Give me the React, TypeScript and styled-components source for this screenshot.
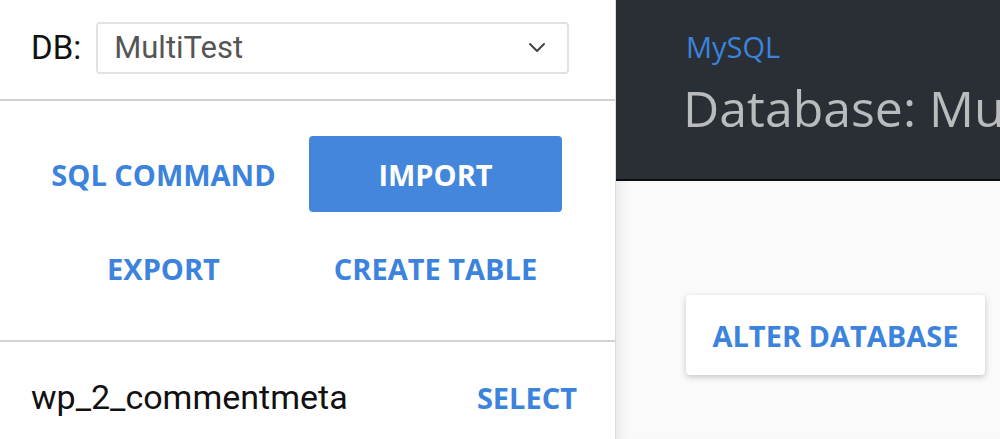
import React from "react";
import styled, { createGlobalStyle } from "styled-components";

const Global = createGlobalStyle`
  html, body { margin: 0; padding: 0; background: #fff; }
  body { width: 1000px; height: 439px; overflow: hidden; }
`;

const BLUE = "#3b83dc";

const Page = styled.div`
  display: flex;
  width: 1000px;
  height: 439px;
  overflow: hidden;
`;

const Sidebar = styled.aside`
  width: 615px;
  flex: 0 0 615px;
  border-right: 1px solid #dcdcdc;
  background: #fff;
  display: flex;
  flex-direction: column;
  overflow: hidden;
`;

const DbBar = styled.div`
  flex: 0 0 auto;
  height: 101px;
  box-sizing: border-box;
  display: flex;
  align-items: center;
  padding: 0 0 4px 31px;
  border-bottom: 2px solid #d2d2d2;
`;

const DbLabel = styled.span`
  font-family: Roboto, "Liberation Sans", sans-serif;
  font-size: 33px;
  color: #111;
  margin-right: 15px;
`;

const SelectBox = styled.div`
  width: 473px;
  height: 52px;
  box-sizing: border-box;
  border: 2px solid #e2e2e2;
  border-radius: 4px;
  display: flex;
  align-items: center;
  justify-content: space-between;
  padding: 0 21px 0 16px;
  font-family: Roboto, "Liberation Sans", sans-serif;
  font-size: 31px;
  color: #555;
`;

const Actions = styled.div`
  flex: 0 0 auto;
  display: grid;
  grid-template-columns: 253px 253px;
  grid-auto-rows: 76px;
  column-gap: 19px;
  row-gap: 18px;
  padding: 35px 0 34px 37px;
  border-bottom: 2px solid #d2d2d2;
`;

const ActionButton = styled.button<{ $primary?: boolean }>`
  border: none;
  border-radius: 4px;
  background: ${(p) => (p.$primary ? "#4386dc" : "transparent")};
  color: ${(p) => (p.$primary ? "#fff" : BLUE)};
  font-family: "Open Sans", "Noto Sans", sans-serif;
  font-weight: 700;
  font-size: 29px;
  padding: 0;
  cursor: pointer;
`;

const TableRow = styled.div`
  flex: 0 0 auto;
  display: flex;
  align-items: center;
  justify-content: space-between;
  height: 110px;
  padding: 0 38px 0 31px;
`;

const TableName = styled.span`
  font-family: Roboto, "Liberation Sans", sans-serif;
  font-size: 34px;
  color: #111;
`;

const LinkText = styled.span`
  font-family: "Open Sans", "Noto Sans", sans-serif;
  font-weight: 700;
  font-size: 29px;
  color: ${BLUE};
`;

const Main = styled.main`
  flex: 1;
  display: flex;
  flex-direction: column;
  background: #fafafa;
  min-width: 0;
`;

const Header = styled.header`
  height: 179px;
  flex: 0 0 179px;
  background: #292f35;
  border-bottom: 2px solid #0c0e10;
  padding-left: 70px;
  display: flex;
  flex-direction: column;
  white-space: nowrap;
  overflow: hidden;
`;

const Crumb = styled.div`
  font-family: "Open Sans", "Noto Sans", sans-serif;
  font-size: 29px;
  color: ${BLUE};
  margin-top: 27px;
  line-height: 40px;
`;

const Title = styled.h1`
  margin: 8px 0 0 -3px;
  font-family: "Open Sans", "Noto Sans", sans-serif;
  font-weight: 400;
  font-size: 50px;
  line-height: 66px;
  color: #b9bbbd;
`;

const Content = styled.div`
  flex: 1;
  padding: 114px 0 0 70px;
  box-shadow: inset 14px 0 14px -10px rgba(0, 0, 0, 0.08);
`;

const Card = styled.button`
  width: 299px;
  height: 80px;
  border: none;
  border-radius: 4px;
  background: #fff;
  box-shadow: 0 2px 6px rgba(0, 0, 0, 0.22);
  font-family: "Open Sans", "Noto Sans", sans-serif;
  font-weight: 700;
  font-size: 29px;
  color: ${BLUE};
  padding: 0;
`;

const Chevron = () => (
  <svg width="18" height="12" viewBox="0 0 18 12" fill="none">
    <path d="M2 2l7 7 7-7" stroke="#444" strokeWidth="2" strokeLinecap="round" strokeLinejoin="round" />
  </svg>
);

export default function App() {
  return (
    <>
      <Global />
      <Page>
        <Sidebar>
          <DbBar>
            <DbLabel>DB:</DbLabel>
            <SelectBox>
              <span>MultiTest</span>
              <Chevron />
            </SelectBox>
          </DbBar>
          <Actions>
            <ActionButton>SQL COMMAND</ActionButton>
            <ActionButton $primary>IMPORT</ActionButton>
            <ActionButton>EXPORT</ActionButton>
            <ActionButton>CREATE TABLE</ActionButton>
          </Actions>
          <TableRow>
            <TableName>wp_2_commentmeta</TableName>
            <LinkText>SELECT</LinkText>
          </TableRow>
        </Sidebar>
        <Main>
          <Header>
            <Crumb>MySQL</Crumb>
            <Title>Database: MultiTest</Title>
          </Header>
          <Content>
            <Card>ALTER DATABASE</Card>
          </Content>
        </Main>
      </Page>
    </>
  );
}
